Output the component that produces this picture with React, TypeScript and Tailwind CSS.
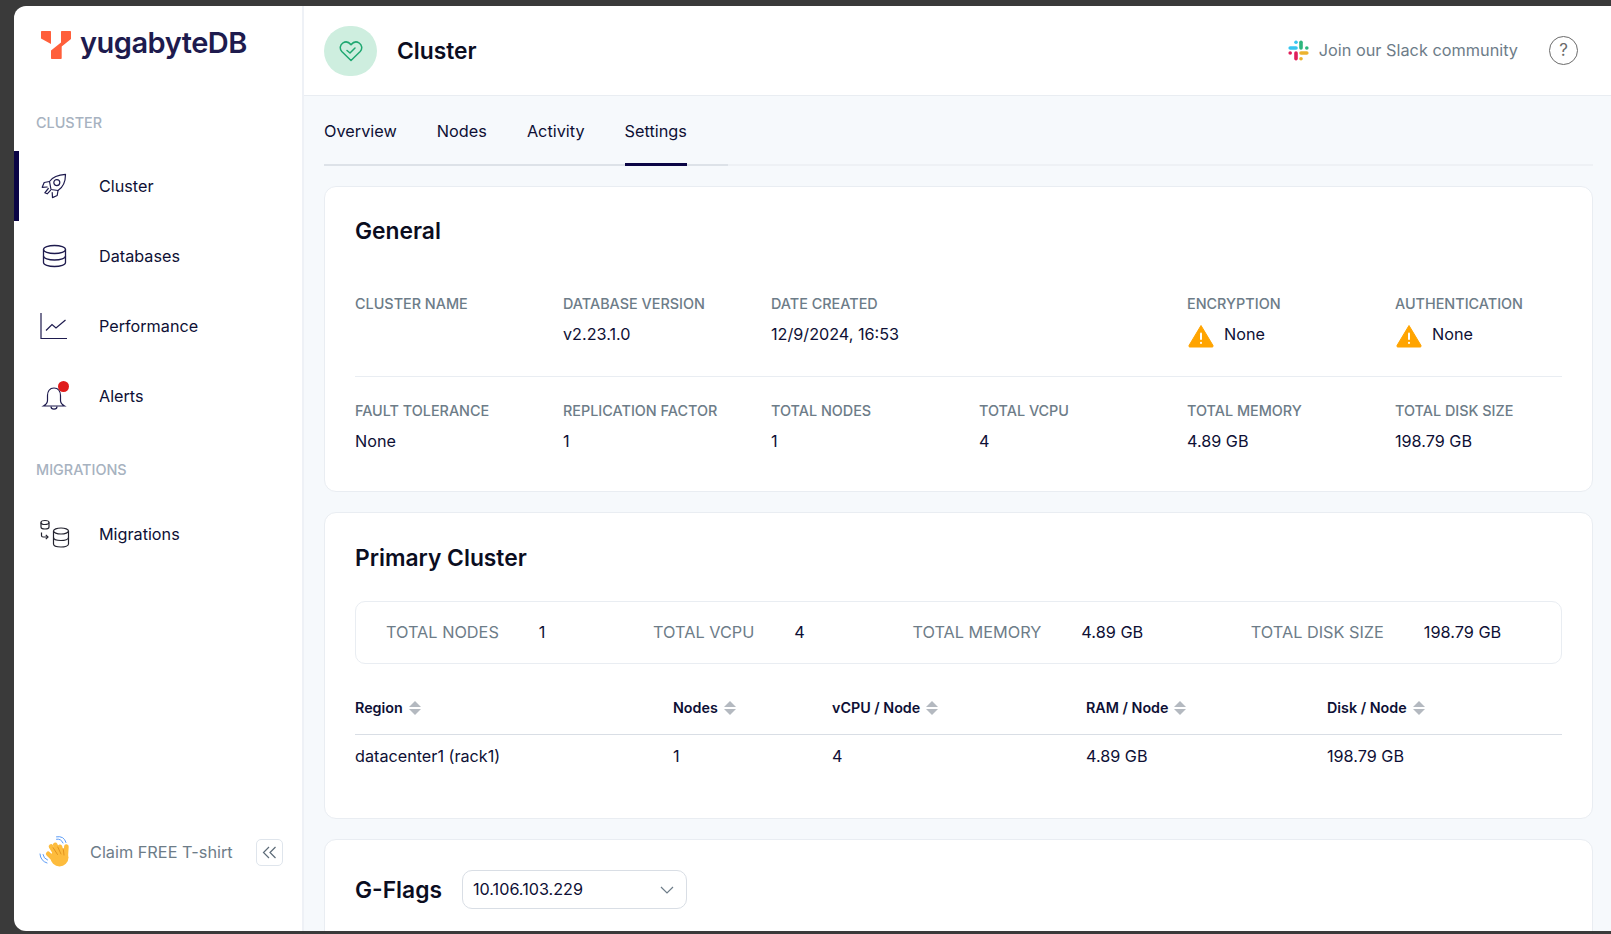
import React from "react";

const navy = "#1e1b4e";

function Rocket() {
  return (
    <svg className="ml-[1px]" width="26" height="26" viewBox="0 0 26 26" fill="none" stroke={navy} strokeWidth="1.2" strokeLinejoin="round" strokeLinecap="round">
      <path d="M8.5 8.5C11.5 4.2 16.5 1.8 24.5 1.4C24.5 9 21.5 14.5 17 17.5L10 16.5L8.5 8.5Z" />
      <circle cx="15.8" cy="9.6" r="3" />
      <path d="M8.5 8.5L3.2 9.5L1.2 14.3L6.2 14" />
      <path d="M17 17.5L16.2 22.5L11.5 24.6L11.2 19.6" />
      <path d="M7.3 15.5L3.8 19.8L6.2 20.8L9.5 17.4" />
    </svg>
  );
}
function Db() {
  return (
    <svg className="ml-[2px]" width="25" height="24" viewBox="0 0 25 24" fill="none" stroke={navy} strokeWidth="1.3">
      <ellipse cx="12.5" cy="5.5" rx="11" ry="4" />
      <path d="M1.5 5.5V18.5C1.5 20.7 6.4 22.5 12.5 22.5S23.5 20.7 23.5 18.5V5.5" />
      <path d="M1.5 12C1.5 14.2 6.4 16 12.5 16S23.5 14.2 23.5 12" />
    </svg>
  );
}
function Chart() {
  return (
    <svg width="28" height="28" viewBox="0 0 28 28" fill="none" stroke={navy} strokeWidth="1.2">
      <path d="M1 1V26.5H27" />
      <path d="M6 18.5L12 12.5L16 16L25.5 8" />
    </svg>
  );
}
function Bell() {
  return (
    <div className="relative ml-[1px] h-[30px] w-[28px]">
      <svg className="absolute left-0 top-[4px]" width="26" height="26" viewBox="0 0 26 26" fill="none" stroke={navy} strokeWidth="1.2">
        <path d="M13 3C8.5 3 6.5 6.5 6.5 10.5V15.5C6.5 18 5 19.5 2.5 21H23.5C21 19.5 19.5 18 19.5 15.5V10.5C19.5 6.5 17.5 3 13 3Z" />
        <path d="M10 21.5C10 25 16 25 16 21.5" />
      </svg>
      <span className="absolute left-[17px] top-0 h-[11px] w-[11px] rounded-full bg-[#e01b1b]" />
    </div>
  );
}
function Migrate() {
  return (
    <svg width="30" height="30" viewBox="0 0 30 30" fill="none" stroke="#23232f" strokeWidth="1.2">
      <ellipse cx="5" cy="3.5" rx="4" ry="2" />
      <path d="M1 3.5V8C1 9.2 2.8 10 5 10S9 9.2 9 8V3.5" />
      <path d="M1.5 13.5V16.5C1.5 17.5 2 18 3 18H8" />
      <path d="M5.8 15.8L8 18L5.8 20.2" />
      <ellipse cx="21" cy="12" rx="7.5" ry="3" />
      <path d="M13.5 12V25C13.5 26.8 17 28 21 28S28.5 26.8 28.5 25V12" />
      <path d="M13.5 18.5C13.5 20.3 17 21.5 21 21.5S28.5 20.3 28.5 18.5" />
    </svg>
  );
}
function Hand() {
  return (
    <svg width="32" height="32" viewBox="0 0 32 32" fill="none" strokeLinecap="round">
      <ellipse cx="20.5" cy="21.5" rx="9" ry="9" fill="#fdbc3d" />
      <g stroke="#fdbc3d" strokeWidth="4.6">
        <path d="M12 10.5L17.7 19.7" />
        <path d="M16.2 8.8L20.6 18" />
        <path d="M21 10.8L23 18" />
        <path d="M27.4 10.5L26.8 20" />
        <path d="M9.2 17.8L15 23.5" />
      </g>
      <g stroke="#e08e1b" strokeWidth="0.9">
        <path d="M14.2 11.8L18.5 18.5" />
        <path d="M18.8 11L22 18" />
        <path d="M24.2 12.5L25 19" />
      </g>
      <path d="M17.5 3.2Q22 2.4 24 7M17.5 .8Q25 -.5 27 6.5" stroke="#5b9bf5" strokeWidth="1" />
      <path d="M1 18Q1.5 25 8 27M4 18.5Q4.5 22.5 8.5 24" stroke="#5b9bf5" strokeWidth="1" />
    </svg>
  );
}
function Slack() {
  return (
    <svg width="21" height="21" viewBox="0 0 21 21" fill="none" strokeLinecap="round">
      <g strokeWidth="3.6">
        <path d="M2.2 8H8" stroke="#36c5f0" />
        <path d="M13 2.2V8" stroke="#2eb67d" />
        <path d="M8 13V18.8" stroke="#e01e5a" />
        <path d="M13 13H18.8" stroke="#ecb22e" />
        <path d="M8 2.2H8.01" stroke="#36c5f0" />
        <path d="M18.8 8H18.81" stroke="#2eb67d" />
        <path d="M2.2 13H2.21" stroke="#e01e5a" />
        <path d="M13 18.8H13.01" stroke="#ecb22e" />
      </g>
    </svg>
  );
}
function Warn() {
  return (
    <svg width="26" height="24" viewBox="0 0 26 24">
      <path d="M13 1.5L25 21.5C25.4 22.4 24.9 23 24 23H2C1.1 23 .6 22.4 1 21.5Z" fill="#ffa400" stroke="#ffa400" strokeLinejoin="round" />
      <rect x="12" y="8.5" width="2" height="7.5" rx="1" fill="#fff" />
      <rect x="12" y="17.8" width="2" height="2.2" rx="1" fill="#fff" />
    </svg>
  );
}
function Sort() {
  return (
    <svg width="12" height="14" viewBox="0 0 12 14" fill="#b4b9c0">
      <path d="M6 0L12 6H0Z" />
      <path d="M6 14L0 8H12Z" />
    </svg>
  );
}

function NavItem({ icon, label, active }: { icon: React.ReactNode; label: string; active?: boolean }) {
  return (
    <div className={"flex h-[70px] items-center border-l-[5px] pl-[21px] " + (active ? "border-[#0b0545]" : "border-transparent")}>
      <div className="flex w-[30px] items-center justify-start">{icon}</div>
      <span className="ml-[29px] text-[16.2px] text-[#0e1035]">{label}</span>
    </div>
  );
}

function Field({ label, value, warn }: { label: string; value?: string; warn?: boolean }) {
  return (
    <div>
      <div className="text-[14.4px] font-medium leading-[20px] text-[#6d7c88]">{label}</div>
      {value && (
        <div className="mt-[8px] flex h-[24px] items-center text-[16.2px] text-[#0e1035]">
          {warn && <span className="ml-[1px] mr-[10px] mt-[3px]"><Warn /></span>}
          {value}
        </div>
      )}
    </div>
  );
}

function Stat({ label, value }: { label: string; value: string }) {
  return (
    <div className="flex items-center gap-[40px] text-[16.3px]">
      <span className="text-[#6d7c88]">{label}</span>
      <span className="text-[#0e1035]">{value}</span>
    </div>
  );
}

const cols = "grid grid-cols-[318px_159px_254px_241px_1fr]";

export default function App() {
  return (
    <div
      className="h-[934px] w-[1611px] overflow-hidden bg-[#3a3a3a] pb-[3px] pl-[14px] pt-[6px]"
      style={{ fontFamily: "Inter, 'Liberation Sans', sans-serif" }}
    >
      <div className="flex h-full overflow-hidden rounded-l-[12px] bg-white">
        <aside className="flex w-[290px] shrink-0 flex-col border-r-2 border-[#eef1f6]">
          <div className="flex h-[69px] items-start pl-[27px] pt-[25px]">
            <svg width="30" height="28" viewBox="0 0 30 28" fill="#ff5f3b">
              <path d="M1 0H9C9.6 0 10 .4 10 1V13L0 7.5V1C0 .4 .4 0 1 0Z" />
              <path d="M21 0H29C29.6 0 30 .4 30 1V8L20.7 15.5V27C20.7 27.6 20.3 28 19.7 28H11C10.4 28 10 27.6 10 27V19.5L20 11.5V1C20 .4 20.4 0 21 0Z" />
            </svg>
            <span className="ml-[9px] -mt-[5px] text-[29px] font-semibold leading-[34px] tracking-[-0.5px] text-[#1e1b4e]">yugabyteDB</span>
          </div>
          <div className="mt-[38px] pl-[22px] text-[14.4px] font-medium leading-[20px] text-[#a7b2c0]">CLUSTER</div>
          <div className="mt-[18px]">
            <NavItem active icon={<Rocket />} label="Cluster" />
            <NavItem icon={<Db />} label="Databases" />
            <NavItem icon={<Chart />} label="Performance" />
            <NavItem icon={<Bell />} label="Alerts" />
          </div>
          <div className="mt-[29px] pl-[22px] text-[14.4px] font-medium leading-[20px] text-[#a7b2c0]">MIGRATIONS</div>
          <div className="mt-[19px]">
            <NavItem icon={<Migrate />} label="Migrations" />
          </div>
          <div className="mt-auto mb-[63px] flex items-center pl-[25px]">
            <Hand />
            <span className="ml-[19px] text-[16.3px] text-[#6d7c88]">Claim FREE T-shirt</span>
            <div className="ml-[23px] flex h-[27px] w-[27px] items-center justify-center rounded-[5px] border border-[#dfe5ec]">
              <svg width="15" height="13" viewBox="0 0 15 13" fill="none" stroke="#5d6b78" strokeWidth="1.2">
                <path d="M7 1L1.5 6.5L7 12" />
                <path d="M13.5 1L8 6.5L13.5 12" />
              </svg>
            </div>
          </div>
        </aside>
        <main className="flex min-w-0 flex-1 flex-col bg-[#f6f9fc]">
          <header className="flex h-[90px] shrink-0 items-center border-b border-[#e9edf2] bg-white pl-[20px] pr-[33px]">
            <div className="flex h-[50px] w-[53px] items-center justify-center rounded-full bg-[#ceeedf]">
              <svg width="24" height="22" viewBox="0 0 24 22" fill="none" stroke="#1fa871" strokeWidth="1.5" strokeLinejoin="round" strokeLinecap="round">
                <path d="M12 20.5L2.8 11.5C.3 8.8 1 4.6 4 2.8C6.8 1.2 10 2.2 12 4.8C14 2.2 17.2 1.2 20 2.8C23 4.6 23.7 8.8 21.2 11.5Z" />
                <path d="M8 10.5L11 13L16 8" />
              </svg>
            </div>
            <h1 className="ml-[20px] mt-[1px] text-[22.8px] font-semibold text-[#0b0d1f]">Cluster</h1>
            <div className="ml-auto flex items-center">
              <Slack />
              <span className="mb-[1px] ml-[10px] text-[16.3px] text-[#6d7c88]">Join our Slack community</span>
              <div className="ml-[31px] flex h-[29px] w-[29px] items-center justify-center rounded-full border border-[#6b6b6b] text-[17px] leading-none text-[#6b6b6b]">?</div>
            </div>
          </header>
          <div className="flex-1 overflow-hidden pl-[20px] pr-[18px]">
            <nav className="h-[70px] border-b-2 border-[#eef1f5] text-[16.3px] text-[#0e1035]">
              <div className="flex h-[70px] w-[404px] gap-[40px] border-b-2 border-[#dde2e8]">
                {["Overview", "Nodes", "Activity"].map((t) => (
                  <div key={t} className="flex items-center pt-[2px]">{t}</div>
                ))}
                <div className="relative flex items-center pt-[2px]">
                  Settings
                  <span className="absolute -bottom-[2px] left-0 right-0 h-[3px] bg-[#0b0545]" />
                </div>
              </div>
            </nav>
            <section className="mt-[20px] h-[306px] rounded-[12px] border border-[#e9edf2] bg-white px-[30px] pt-[28px]">
              <h2 className="text-[22.8px] font-semibold leading-[32px] text-[#0b0d1f]">General</h2>
              <div className="mt-[47px] grid grid-cols-[repeat(6,208px)] border-b border-[#e9edf2] pb-[30px]">
                <Field label="CLUSTER NAME" />
                <Field label="DATABASE VERSION" value="v2.23.1.0" />
                <Field label="DATE CREATED" value="12/9/2024, 16:53" />
                <div />
                <Field label="ENCRYPTION" value="None" warn />
                <Field label="AUTHENTICATION" value="None" warn />
              </div>
              <div className="mt-[24px] grid grid-cols-[repeat(6,208px)]">
                <Field label="FAULT TOLERANCE" value="None" />
                <Field label="REPLICATION FACTOR" value="1" />
                <Field label="TOTAL NODES" value="1" />
                <Field label="TOTAL VCPU" value="4" />
                <Field label="TOTAL MEMORY" value="4.89 GB" />
                <Field label="TOTAL DISK SIZE" value="198.79 GB" />
              </div>
            </section>
            <section className="mt-[20px] h-[307px] rounded-[12px] border border-[#e9edf2] bg-white px-[30px] pt-[28px]">
              <h2 className="text-[22.8px] font-semibold leading-[33px] text-[#0b0d1f]">Primary Cluster</h2>
              <div className="mt-[27px] flex h-[63px] items-center gap-[107.6px] rounded-[10px] border border-[#e9edf2] pl-[30px]">
                <Stat label="TOTAL NODES" value="1" />
                <Stat label="TOTAL VCPU" value="4" />
                <Stat label="TOTAL MEMORY" value="4.89 GB" />
                <Stat label="TOTAL DISK SIZE" value="198.79 GB" />
              </div>
              <div className={cols + " mt-[22px] h-[49px] items-center border-b border-[#d9dee5] pb-[4px] text-[14.3px] font-semibold text-[#0e1035]"}>
                {["Region", "Nodes", "vCPU / Node", "RAM / Node", "Disk / Node"].map((h) => (
                  <div key={h} className="flex items-center gap-[6px]">{h}<Sort /></div>
                ))}
              </div>
              <div className={cols + " mt-[9px] text-[16.2px] leading-[24px] text-[#0e1035]"}>
                <div>datacenter1 (rack1)</div>
                <div>1</div>
                <div>4</div>
                <div>4.89 GB</div>
                <div>198.79 GB</div>
              </div>
            </section>
            <section className="mt-[20px] h-[200px] rounded-[12px] border border-[#e9edf2] bg-white px-[30px] pt-[30px]">
              <div className="flex items-center">
                <h2 className="text-[22.8px] font-semibold leading-[38px] text-[#0b0d1f]">G-Flags</h2>
                <div className="ml-[20px] flex h-[39px] w-[225px] items-center justify-between rounded-[10px] border border-[#d9dee5] pl-[10px] pr-[12px] text-[16.2px] text-[#0e1035]">
                  <span className="mb-[1px]">10.106.103.229</span>
                  <svg width="14" height="8" viewBox="0 0 14 8" fill="none" stroke="#6d7c88" strokeWidth="1.2"><path d="M1 1L7 7L13 1" /></svg>
                </div>
              </div>
            </section>
          </div>
        </main>
      </div>
    </div>
  );
}
